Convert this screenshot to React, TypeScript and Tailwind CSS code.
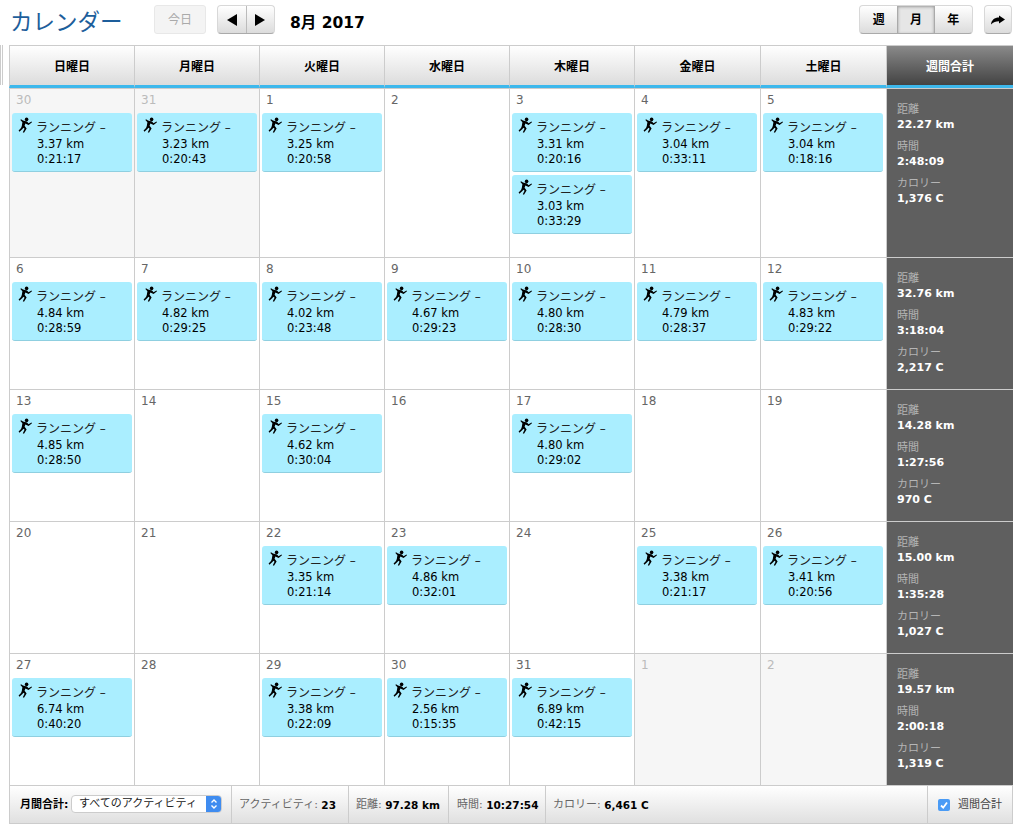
import { JSX } from "react";

type Run = { km: string; time: string };
type Day = { n: number; muted?: boolean; runs?: Run[] };
type Week = { km: string; time: string; cal: string; days: Day[] };

const weeks: Week[] = [
  {
    km: "22.27 km",
    time: "2:48:09",
    cal: "1,376 C",
    days: [
      { n: 30, muted: true, runs: [{ km: "3.37", time: "0:21:17" }] },
      { n: 31, muted: true, runs: [{ km: "3.23", time: "0:20:43" }] },
      { n: 1, runs: [{ km: "3.25", time: "0:20:58" }] },
      { n: 2 },
      { n: 3, runs: [{ km: "3.31", time: "0:20:16" }, { km: "3.03", time: "0:33:29" }] },
      { n: 4, runs: [{ km: "3.04", time: "0:33:11" }] },
      { n: 5, runs: [{ km: "3.04", time: "0:18:16" }] },
    ],
  },
  {
    km: "32.76 km",
    time: "3:18:04",
    cal: "2,217 C",
    days: [
      { n: 6, runs: [{ km: "4.84", time: "0:28:59" }] },
      { n: 7, runs: [{ km: "4.82", time: "0:29:25" }] },
      { n: 8, runs: [{ km: "4.02", time: "0:23:48" }] },
      { n: 9, runs: [{ km: "4.67", time: "0:29:23" }] },
      { n: 10, runs: [{ km: "4.80", time: "0:28:30" }] },
      { n: 11, runs: [{ km: "4.79", time: "0:28:37" }] },
      { n: 12, runs: [{ km: "4.83", time: "0:29:22" }] },
    ],
  },
  {
    km: "14.28 km",
    time: "1:27:56",
    cal: "970 C",
    days: [
      { n: 13, runs: [{ km: "4.85", time: "0:28:50" }] },
      { n: 14 },
      { n: 15, runs: [{ km: "4.62", time: "0:30:04" }] },
      { n: 16 },
      { n: 17, runs: [{ km: "4.80", time: "0:29:02" }] },
      { n: 18 },
      { n: 19 },
    ],
  },
  {
    km: "15.00 km",
    time: "1:35:28",
    cal: "1,027 C",
    days: [
      { n: 20 },
      { n: 21 },
      { n: 22, runs: [{ km: "3.35", time: "0:21:14" }] },
      { n: 23, runs: [{ km: "4.86", time: "0:32:01" }] },
      { n: 24 },
      { n: 25, runs: [{ km: "3.38", time: "0:21:17" }] },
      { n: 26, runs: [{ km: "3.41", time: "0:20:56" }] },
    ],
  },
  {
    km: "19.57 km",
    time: "2:00:18",
    cal: "1,319 C",
    days: [
      { n: 27, runs: [{ km: "6.74", time: "0:40:20" }] },
      { n: 28 },
      { n: 29, runs: [{ km: "3.38", time: "0:22:09" }] },
      { n: 30, runs: [{ km: "2.56", time: "0:15:35" }] },
      { n: 31, runs: [{ km: "6.89", time: "0:42:15" }] },
      { n: 1, muted: true },
      { n: 2, muted: true },
    ],
  },
];

const dayNames = ["日曜日", "月曜日", "火曜日", "水曜日", "木曜日", "金曜日", "土曜日"];
const gridCols = "grid grid-cols-[125px_125px_125px_125px_125px_126px_126px_127px]";

const RunnerIcon = (): JSX.Element => (
  <svg viewBox="0 0 14 16" className="-mt-[3px] h-4 w-[14px] shrink-0" fill="#000">
    <circle cx="8.6" cy="2.4" r="1.8" />
    <path d="M5 3.6L3 2.2L2.4 3L4.4 5.2L3.8 9L3 11L0.6 13.6L1.4 14.8L4.4 12L5.4 10.8L6.6 11.8L4.8 15.2L6 15.8L8.6 11.4L6.6 8.8L7.4 6.4L10.6 8L14 5.2L13.4 4.4L10.6 6.2L9 4.4Z" />
  </svg>
);

const RunCard = ({ km, time }: Run): JSX.Element => (
  <div className="h-[59px] w-[120px] rounded-[3px] border-b border-[#8fcfe0] bg-[#aaeeff] pt-[7px] pl-[6px] text-[11.5px] leading-[17px] text-black">
    <div className="flex">
      <RunnerIcon />
      <span className="ml-[4px] text-[12px] whitespace-nowrap text-[#222]">ランニング –</span>
    </div>
    <div className="-mt-px pl-[19px]">{km} km</div>
    <div className="-mt-[2px] pl-[19px]">{time}</div>
  </div>
);

const WeekTotal = ({ km, time, cal }: Week): JSX.Element => (
  <div className="border-l border-[#ccc] bg-[#5f5f5f] pt-[14px] pl-[10px] text-[11px] leading-[17px]">
    <div className="leading-[13px] text-[#b5b5b5]">距離</div>
    <div className="font-bold text-white">{km}</div>
    <div className="mt-[7px] leading-[13px] text-[#b5b5b5]">時間</div>
    <div className="font-bold text-white">{time}</div>
    <div className="mt-[7px] leading-[13px] text-[#b5b5b5]">カロリー</div>
    <div className="font-bold text-white">{cal}</div>
  </div>
);

const App = (): JSX.Element => {
  return (
    <div
      className="h-[836px] w-[1021px] overflow-hidden bg-white text-[12px]"
      style={{ fontFamily: '"DejaVu Sans", "Noto Sans CJK JP", sans-serif' }}
    >
      {/* Toolbar */}
      <div className="flex h-[45px] items-start">
        <h1 className="mt-[7px] ml-[10px] w-[144px] text-[22.5px] leading-[30px] font-normal whitespace-nowrap text-[#1d5e9b]">カレンダー</h1>
        <button className="mt-[5px] h-[29px] w-[52px] rounded-[3px] border border-[#e8e8e8] bg-[#f4f4f4] text-[12px] text-[#aaa]">今日</button>
        <div className="mt-[5px] ml-[11px] flex h-[29px] w-[58px] rounded-[4px] border border-[#d8d8d8] border-b-[#aaa] bg-gradient-to-b from-white to-[#dcdcdc]">
          <div className="flex flex-1 items-center justify-center border-r border-[#bbb]">
            <svg viewBox="0 0 10 12" className="h-3 w-[10px]"><path d="M10 0V12L0 6Z" fill="#000" /></svg>
          </div>
          <div className="flex flex-1 items-center justify-center">
            <svg viewBox="0 0 10 12" className="h-3 w-[10px]"><path d="M0 0V12L10 6Z" fill="#000" /></svg>
          </div>
        </div>
        <div className="mt-[13px] ml-[15px] text-[15.5px] leading-[20px] font-bold text-black">8月 2017</div>
        <div className="mt-[5px] ml-auto flex h-[29px] w-[114px] rounded-[4px] border border-[#d8d8d8] border-b-[#aaa] bg-gradient-to-b from-white to-[#dcdcdc] text-[12px] font-bold text-black">
          <div className="flex w-[38px] items-center justify-center">週</div>
          <div className="flex w-[38px] items-center justify-center border-x border-[#aaa] bg-[#e6e6e6] shadow-[inset_0_1px_3px_#999]">月</div>
          <div className="flex w-[38px] items-center justify-center">年</div>
        </div>
        <div className="mt-[5px] mr-[9px] ml-[11px] flex h-[29px] w-[28px] items-center justify-center rounded-[4px] border border-[#d8d8d8] border-b-[#aaa] bg-gradient-to-b from-white to-[#dcdcdc]">
          <svg viewBox="0 0 14 10" className="h-[10px] w-[14px]"><path d="M8 0.5L14 4.5L8 8.5V6.2C5 6.2 2.2 7 0 9.5C0.3 5 3.6 2.4 8 2.4Z" fill="#000" /></svg>
        </div>
      </div>

      <div className="flex">
        {/* Resize handle */}
        <div className="flex h-10 w-[9px] gap-[1px]">
          <div className="h-full w-px bg-[#ccc]" />
          <div className="h-full w-px bg-[#ccc]" />
        </div>

        <div className="w-[1004px]">
          {/* Weekday header */}
          <div className={`${gridCols} h-[44px] border-y border-[#ccc]`}>
            {dayNames.map((name) => (
              <div
                key={name}
                className="flex items-center justify-center border-l border-b-[3px] border-l-[#ccc] border-b-[#3db8ec] bg-gradient-to-b from-white to-[#dcdcdc] pt-[2px] text-[12px] font-bold text-black"
              >
                {name}
              </div>
            ))}
            <div className="flex items-center justify-center border-l border-b-[3px] border-l-[#ccc] border-b-[#3db8ec] bg-gradient-to-b from-[#8a8a8a] to-[#444] pt-[2px] text-[12px] font-bold text-white">
              週間合計
            </div>
          </div>

          {/* Weeks */}
          {weeks.map((week, w) => (
            <div key={week.km} className={`${gridCols} ${w === 0 ? "h-[169px]" : "h-[132px]"} border-b border-[#ccc]`}>
              {week.days.map((day, i) => (
                <div
                  key={i}
                  className={`flex flex-col gap-[3px] border-l border-[#ccc] pl-[2px] ${day.muted ? "bg-[#f6f6f6]" : "bg-white"}`}
                >
                  <div className={`mt-[2px] mb-px h-[18px] pl-[4px] text-[12px] leading-[18px] ${day.muted ? "text-[#bbb]" : "text-[#666]"}`}>
                    {day.n}
                  </div>
                  {day.runs?.map((run) => <RunCard key={run.time} {...run} />)}
                </div>
              ))}
              <WeekTotal {...week} />
            </div>
          ))}

          {/* Month summary */}
          <div className="flex h-[38px] items-center border-x border-b border-[#ccc] bg-gradient-to-b from-white to-[#e0e0e0] text-[11px] text-[#666]">
            <div className="flex h-full w-[221px] items-center pt-[2px] pl-[10px]">
              <span className="w-[51px] font-bold whitespace-nowrap text-black">月間合計:</span>
              <div className="mb-[4px] flex h-[18px] w-[151px] overflow-hidden rounded-[4px] border border-[#ccc] bg-white text-[#222]">
                <span className="flex-1 pl-[7px] text-[11px] leading-[16px] whitespace-nowrap">すべてのアクティビティ</span>
                <span className="flex w-[15px] items-center justify-center bg-[#3f8cf0]">
                  <svg viewBox="0 0 8 12" className="h-3 w-2" fill="none" stroke="#fff" strokeWidth="1.4"><path d="M1.5 4.5L4 2L6.5 4.5M1.5 7.5L4 10L6.5 7.5" /></svg>
                </span>
              </div>
            </div>
            <div className="flex h-full w-[117px] items-center border-l border-[#ccc] pt-[2px] pl-[7px] whitespace-nowrap">
              アクティビティ:&nbsp;<b className="text-[10.5px] text-black">23</b>
            </div>
            <div className="flex h-full w-[100px] items-center border-l border-[#ccc] pt-[2px] pl-[7px] whitespace-nowrap">
              距離:&nbsp;<b className="text-[10.5px] text-black">97.28 km</b>
            </div>
            <div className="flex h-full w-[97px] items-center border-l border-[#ccc] pt-[2px] pl-[8px] whitespace-nowrap">
              時間:&nbsp;<b className="text-[10.5px] text-black">10:27:54</b>
            </div>
            <div className="flex h-full w-[109px] items-center border-l border-[#ccc] pt-[2px] pl-[7px] whitespace-nowrap">
              カロリー:&nbsp;<b className="text-[10.5px] text-black">6,461 C</b>
            </div>
            <div className="ml-auto flex h-full w-[85px] items-center border-l border-[#ccc] pl-[10px] text-[#444]">
              <span className="flex h-[12px] w-[12px] items-center justify-center rounded-[2px] bg-[#4a9bf5]">
                <svg viewBox="0 0 12 12" className="h-3 w-3" fill="none" stroke="#fff" strokeWidth="1.8"><path d="M3 6.5L5.2 8.7L9 3.5" /></svg>
              </span>
              <span className="mt-[2px] ml-[8px] text-[11px] whitespace-nowrap">週間合計</span>
            </div>
          </div>
        </div>
      </div>
    </div>
  );
};

export default App;
